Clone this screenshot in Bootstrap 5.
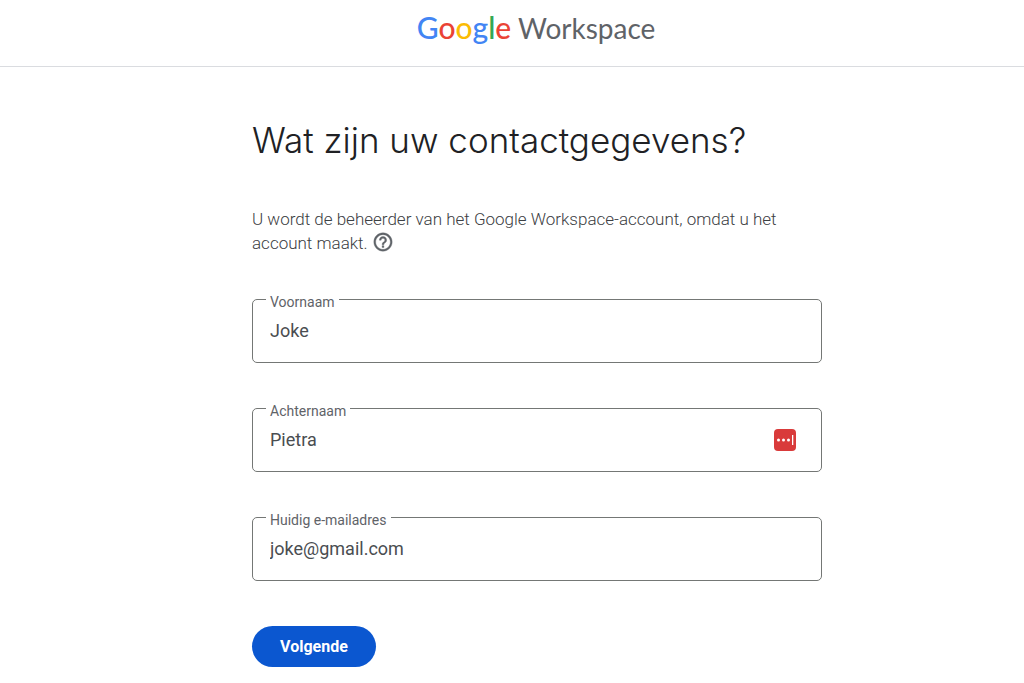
<!DOCTYPE html>
<html lang="nl">
<head>
<meta charset="utf-8">
<meta name="viewport" content="width=device-width, initial-scale=1">
<title>Google Workspace</title>
<link href="https://cdn.jsdelivr.net/npm/bootstrap@5.3.0/dist/css/bootstrap.min.css" rel="stylesheet">
<style>
  body { font-family: Roboto, "Liberation Sans", sans-serif; font-size: 16px; line-height: 23px; color: #5f6368; }
  .site-header { height: 67px; padding-bottom: 12px; border-bottom: 1px solid #dadce0; }
  .wordmark { font-family: Lato, sans-serif; font-size: 28px; line-height: 36px; color: #5f6368; }
  .wordmark strong { font-size: 30px; font-weight: 500; }
  .g-blue { color: #4285f4; } .g-red { color: #ea4335; } .g-yellow { color: #fbbc04; } .g-green { color: #34a853; }
  .signup { max-width: 620px; padding-left: 50px; padding-top: 50px; }
  .signup h1 { font-family: Inter, sans-serif; font-size: 35px; line-height: 46px; font-weight: 300; color: #202124; margin-bottom: 45px; }
  .intro { font-size: 17px; font-weight: 300; color: #3c4043; margin-bottom: 44px; padding-right: 40px; }
  .help { color: #5f6368; }
  .help svg { width: 22px; height: 22px; vertical-align: text-bottom; }
  .outlined { margin-bottom: 45px; }
  .outlined label { position: absolute; top: -7px; left: 14px; padding: 0 4px; background: #fff; font-size: 14px; line-height: 20px; }
  .outlined .form-control { height: 64px; padding: 0 17px 2px; font-size: 18px; color: #4a4d51; border: 1px solid #747775; border-radius: 5px; }
  .manager { position: absolute; top: 21px; right: 26px; width: 22px; height: 22px; }
  .btn-next { height: 41px; width: 124px; font-size: 16px; font-weight: 700; background: #0b57d0; color: #fff; }
  .btn-next:hover { background: #0842a0; color: #fff; }
</style>
</head>
<body class="bg-white">
<header class="site-header d-flex align-items-center justify-content-center">
  <a href="#" class="wordmark text-decoration-none ms-5"><strong><span class="g-blue">G</span><span class="g-red">o</span><span class="g-yellow">o</span><span class="g-blue">g</span><span class="g-green">l</span><span class="g-red">e</span></strong> Workspace</a>
</header>
<main class="signup mx-auto">
  <h1>Wat zijn uw contactgegevens?</h1>
  <p class="intro">U wordt de beheerder van het Google Workspace-account, omdat u het account maakt.
    <a href="#" class="help" aria-label="Help"><svg viewBox="0 0 24 24" fill="currentColor" stroke="currentColor" stroke-width=".4"><path d="M11 18h2v-2h-2v2zm1-16C6.480 2 2 6.480 2 12s4.480 10 10 10 10-4.480 10-10S17.520 2 12 2zm0 18c-4.410 0-8-3.590-8-8s3.590-8 8-8 8 3.590 8 8-3.590 8-8 8zm0-14c-2.210 0-4 1.790-4 4h2c0-1.100.9-2 2-2s2 .9 2 2c0 2-3 1.750-3 5h2c0-2.250 3-2.500 3-5 0-2.210-1.790-4-4-4z"/></svg></a></p>
  <form>
    <div class="outlined position-relative">
      <input id="voornaam" class="form-control" type="text" value="Joke">
      <label for="voornaam">Voornaam</label>
    </div>
    <div class="outlined position-relative">
      <input id="achternaam" class="form-control" type="text" value="Pietra">
      <label for="achternaam">Achternaam</label>
      <svg class="manager" viewBox="0 0 22 22" aria-hidden="true"><rect width="22" height="22" rx="4" fill="#d93a3a"/><g fill="#fff"><circle cx="4.500" cy="11" r="1.500"/><circle cx="9.500" cy="11" r="1.500"/><circle cx="14.500" cy="11" r="1.500"/><rect x="18" y="6" width="1.300" height="10"/></g></svg>
    </div>
    <div class="outlined position-relative">
      <input id="email" class="form-control" type="email" value="joke@gmail.com">
      <label for="email">Huidig e-mailadres</label>
    </div>
    <button type="submit" class="btn btn-next rounded-pill border-0">Volgende</button>
  </form>
</main>
<script src="https://cdn.jsdelivr.net/npm/bootstrap@5.3.0/dist/js/bootstrap.bundle.min.js"></script>
</body>
</html>
